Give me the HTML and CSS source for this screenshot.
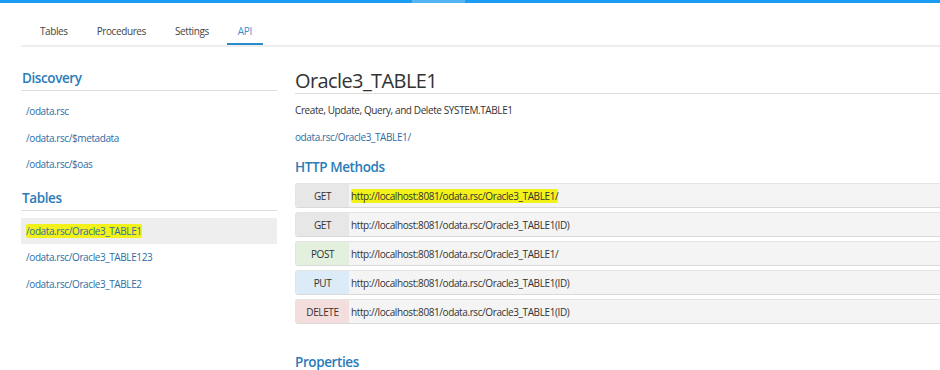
FILE: index.html
```html
<!DOCTYPE html>
<html lang="en">
<head>
  <meta charset="UTF-8" />
  <meta name="viewport" content="width=device-width, initial-scale=1.0"/>
  <title>API - Oracle3_TABLE1</title>
  <link rel="stylesheet" href="styles.css">
</head>
<body>

  <div class="topbar">
    <span class="seg seg-left"></span>
    <span class="seg seg-mid"></span>
    <span class="seg seg-right"></span>
  </div>

  <nav class="tabs">
    <a href="#">Tables</a>
    <a href="#">Procedures</a>
    <a href="#">Settings</a>
    <a href="#" class="active">API</a>
  </nav>

  <div class="page">
    <aside class="sidebar">
      <h3>Discovery</h3>
      <ul class="links">
        <li><a href="#">/odata.rsc</a></li>
        <li><a href="#">/odata.rsc/$metadata</a></li>
        <li><a href="#">/odata.rsc/$oas</a></li>
      </ul>

      <h3>Tables</h3>
      <ul class="links">
        <li class="selected"><a href="#"><span class="marker">/odata.rsc/Oracle3_TABLE1</span></a></li>
        <li><a href="#">/odata.rsc/Oracle3_TABLE123</a></li>
        <li><a href="#">/odata.rsc/Oracle3_TABLE2</a></li>
      </ul>
    </aside>

    <main class="content">
      <h1>Oracle3_TABLE1</h1>
      <p class="desc">Create, Update, Query, and Delete SYSTEM.TABLE1</p>
      <p class="path"><a href="#">odata.rsc/Oracle3_TABLE1/</a></p>

      <h3>HTTP Methods</h3>
      <div class="methods">
        <div class="method">
          <span class="verb get">GET</span>
          <span class="url"><span class="marker">http://localhost:8081/odata.rsc/Oracle3_TABLE1/</span></span>
        </div>
        <div class="method">
          <span class="verb get">GET</span>
          <span class="url">http://localhost:8081/odata.rsc/Oracle3_TABLE1(ID)</span>
        </div>
        <div class="method">
          <span class="verb post">POST</span>
          <span class="url">http://localhost:8081/odata.rsc/Oracle3_TABLE1/</span>
        </div>
        <div class="method">
          <span class="verb put">PUT</span>
          <span class="url">http://localhost:8081/odata.rsc/Oracle3_TABLE1(ID)</span>
        </div>
        <div class="method">
          <span class="verb delete">DELETE</span>
          <span class="url">http://localhost:8081/odata.rsc/Oracle3_TABLE1(ID)</span>
        </div>
      </div>

      <h3 class="props">Properties</h3>
    </main>
  </div>

</body>
</html>
```

FILE: styles.css
```css
body {
  font-family: 'Open Sans', 'Noto Sans', sans-serif;
  font-size: 10px;
  letter-spacing: -0.4px;
  color: #333;
  background: white;
  margin: 0;
  overflow: hidden;
}

a {
  text-decoration: none;
}

.topbar {
  display: flex;
  height: 3px;
}

.seg {
  background: #1a9cf2;
}

.seg-left {
  width: 412px;
}

.seg-mid {
  width: 53px;
  background: #55b4f5;
}

.seg-right {
  flex: 1;
}

.tabs {
  display: flex;
  gap: 7px;
  margin-left: 21px;
  padding-left: 8px;
  height: 42px;
  border-bottom: 2px solid #eeeeee;
}

.tabs a {
  padding: 21px 11px 7px;
  line-height: 14px;
  color: #444;
  border-bottom: 2px solid transparent;
}

.tabs a.active {
  color: #3a8fd0;
  border-bottom-color: #2a8ccc;
}

.page {
  display: grid;
  grid-template-columns: 256px 1fr;
  gap: 18px;
  padding-left: 21px;
}

h3 {
  margin: 0;
  font-size: 13.5px;
  font-weight: 600;
  line-height: 19px;
  letter-spacing: -0.4px;
  color: #2b7bb9;
}

.sidebar {
  padding-top: 22px;
}

.sidebar h3 {
  padding: 0 1px 2px;
  border-bottom: 1px solid #dddddd;
}

.links {
  list-style: none;
  margin: 7px 0 11px;
  padding: 0;
}

.links li {
  padding: 6.25px 5px;
  line-height: 14px;
}

.links li.selected {
  background: #eeeeee;
}

.links a {
  color: #2e6da4;
}

.marker {
  background: #f2f21a;
  border-radius: 2px;
}

.content {
  padding-top: 22px;
  min-width: 0;
}

h1 {
  margin: 0;
  font-size: 20px;
  font-weight: 400;
  line-height: 24px;
  letter-spacing: -0.6px;
  color: #333;
  border-bottom: 1px solid #dddddd;
}

.desc {
  margin: 9px 0 0;
  line-height: 14px;
}

.path {
  margin: 13px 0 0;
  line-height: 14px;
}

.path a {
  color: #2e6da4;
}

.content h3 {
  margin-top: 14px;
}

.methods {
  display: flex;
  flex-direction: column;
  gap: 4px;
  margin-top: 6px;
}

/* rows run on past the right edge of the window */
.method {
  display: flex;
  align-items: center;
  height: 23px;
  background: #f4f4f4;
  border: 1px solid #e4e4e4;
  border-bottom-color: #dadada;
  border-right: none;
  border-radius: 3px 0 0 3px;
  overflow: hidden;
}

.verb {
  width: 53px;
  height: 100%;
  display: flex;
  align-items: center;
  justify-content: center;
  flex-shrink: 0;
}

.verb.get {
  background: #e7e7e7;
}

.verb.post {
  background: #e2f0dd;
}

.verb.put {
  background: #dbebf7;
}

.verb.delete {
  background: #f3dddd;
}

.url {
  padding-left: 2px;
  white-space: nowrap;
}

.content h3.props {
  margin-top: 29px;
}
```
